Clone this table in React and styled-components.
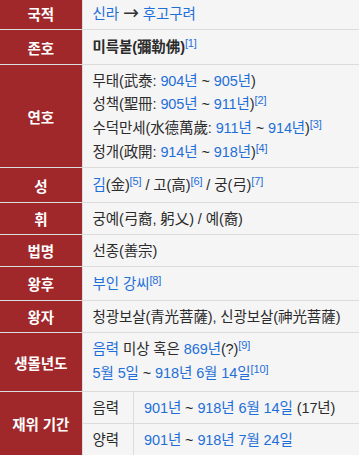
import React from "react";
import styled, { createGlobalStyle } from "styled-components";

const GlobalStyle = createGlobalStyle`
  html, body {
    margin: 0;
    padding: 0;
    background: #f5f5f5;
  }
  body {
    font-family: "Liberation Sans", "Noto Sans CJK KR", sans-serif;
    font-size: 14.5px;
    letter-spacing: -0.1px;
    color: #2b2b2b;
  }
`;

const Infobox = styled.table`
  width: 359px;
  margin-top: -3px;
  border-collapse: collapse;
  table-layout: fixed;
  background: #f5f5f5;
`;

const Row = styled.tr`
  border-top: 1px solid #dcdcdc;
  border-bottom: 1px solid #dcdcdc;
`;

const Label = styled.th`
  box-sizing: border-box;
  width: 82px;
  padding: 0;
  background: #a0282b;
  color: #fff;
  font-weight: bold;
  text-align: center;
  vertical-align: middle;
  border-right: 1px solid #dcdcdc;
  white-space: nowrap;
`;

const Value = styled.td`
  padding: ${(p) =>
    p.$flush ? "0" : `${p.$py || 4.5}px 2px ${p.$py || 4.5}px 10px`};
  line-height: 22px;
  text-align: left;
  vertical-align: middle;
  white-space: nowrap;
  font-weight: ${(p) => (p.$bold ? "bold" : "normal")};
`;

const Line = styled.div`
  line-height: ${(p) => p.$lh || 22}px;
`;

const Link = styled.span`
  color: #1f6fd8;
`;

const Arrow = styled.span`
  font-family: "DejaVu Sans", sans-serif;
  font-size: 19px;
  line-height: 0;
  color: #333;
`;

const Ref = styled.sup`
  color: #1f6fd8;
  font-size: 11px;
  font-weight: normal;
  line-height: 1;
  vertical-align: 5px;
`;

const SubTable = styled.table`
  width: 100%;
  border-collapse: collapse;
`;

const SubRow = styled.tr`
  & + & {
    border-top: 1px solid #dcdcdc;
  }
`;

const SubLabel = styled.td`
  box-sizing: border-box;
  width: 51px;
  padding: 4.5px 0 4.5px 10px;
  line-height: 22px;
  border-right: 1px solid #dcdcdc;
  white-space: nowrap;
`;

const SubValue = styled.td`
  padding: 4.5px 10px;
  line-height: 22px;
  white-space: nowrap;
`;

const App = () => {
  return (
    <>
      <GlobalStyle />
      <Infobox>
        <tbody>
          <Row>
            <Label>국적</Label>
            <Value>
              <Link>신라</Link> <Arrow>→</Arrow> <Link>후고구려</Link>
            </Value>
          </Row>
          <Row>
            <Label>존호</Label>
            <Value $bold $py={6}>
              미륵불(彌勒佛)<Ref>[1]</Ref>
            </Value>
          </Row>
          <Row>
            <Label>연호</Label>
            <Value>
              <Line>
                무태(武泰: <Link>904년</Link> ~ <Link>905년</Link>)
              </Line>
              <Line $lh={24}>
                성책(聖冊: <Link>905년</Link> ~ <Link>911년</Link>)<Ref>[2]</Ref>
              </Line>
              <Line $lh={25}>
                수덕만세(水德萬歲: <Link>911년</Link> ~ <Link>914년</Link>)
                <Ref>[3]</Ref>
              </Line>
              <Line>
                정개(政開: <Link>914년</Link> ~ <Link>918년</Link>)<Ref>[4]</Ref>
              </Line>
            </Value>
          </Row>
          <Row>
            <Label>성</Label>
            <Value $py={6}>
              <Link>김</Link>(金)<Ref>[5]</Ref> / 고(高)<Ref>[6]</Ref> / 궁(弓)
              <Ref>[7]</Ref>
            </Value>
          </Row>
          <Row>
            <Label>휘</Label>
            <Value>궁예(弓裔, 躬乂) / 예(裔)</Value>
          </Row>
          <Row>
            <Label>법명</Label>
            <Value>선종(善宗)</Value>
          </Row>
          <Row>
            <Label>왕후</Label>
            <Value $py={5.5}>
              <Link>부인 강씨</Link>
              <Ref>[8]</Ref>
            </Value>
          </Row>
          <Row>
            <Label>왕자</Label>
            <Value>청광보살(青光菩薩), 신광보살(神光菩薩)</Value>
          </Row>
          <Row>
            <Label>생몰년도</Label>
            <Value $py={5}>
              <Line $lh={23}>
                <Link>음력</Link> 미상 혹은 <Link>869년</Link>(?)<Ref>[9]</Ref>
              </Line>
              <Line $lh={25}>
                <Link>5월 5일</Link> ~ <Link>918년</Link> <Link>6월 14일</Link>
                <Ref>[10]</Ref>
              </Line>
            </Value>
          </Row>
          <Row>
            <Label>재위 기간</Label>
            <Value $flush>
              <SubTable>
                <tbody>
                  <SubRow>
                    <SubLabel>음력</SubLabel>
                    <SubValue>
                      <Link>901년</Link> ~ <Link>918년</Link>{" "}
                      <Link>6월 14일</Link> (17년)
                    </SubValue>
                  </SubRow>
                  <SubRow>
                    <SubLabel>양력</SubLabel>
                    <SubValue>
                      <Link>901년</Link> ~ <Link>918년</Link>{" "}
                      <Link>7월 24일</Link>
                    </SubValue>
                  </SubRow>
                </tbody>
              </SubTable>
            </Value>
          </Row>
        </tbody>
      </Infobox>
    </>
  );
};

export default App;
